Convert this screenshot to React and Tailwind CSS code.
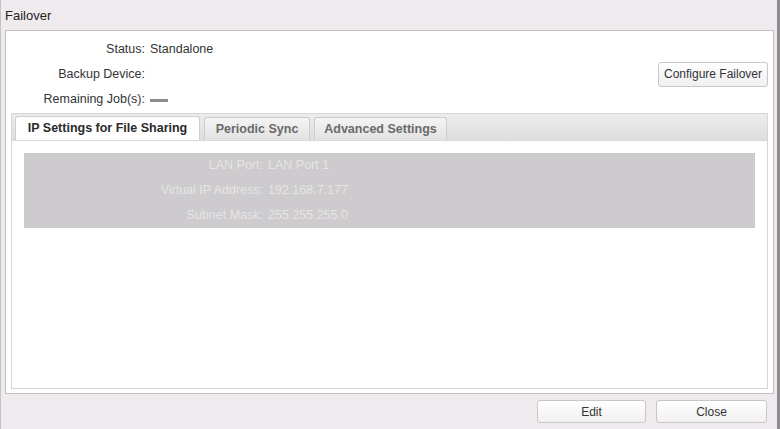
import React from "react";

const font = { fontFamily: '"Liberation Sans", Arial, sans-serif' };

const infoRows = [
  { label: "Status:", value: "Standalone" },
  { label: "Backup Device:", value: "" },
  { label: "Remaining Job(s):", value: "dash" },
];

const ipRows = [
  { label: "LAN Port:", value: "LAN Port 1" },
  { label: "Virtual IP Address:", value: "192.168.7.177" },
  { label: "Subnet Mask:", value: "255.255.255.0" },
];

const Button = ({ children, className }) => (
  <button
    className={
      "h-[23px] rounded-[3px] border border-[#c9c5c9] bg-gradient-to-b from-[#ffffff] to-[#f1eff1] text-[12px] text-[#333] " +
      className
    }
  >
    {children}
  </button>
);

const App = () => {
  return (
    <div
      className="flex h-[429px] w-[780px] flex-col border-l border-[#c4c0c4] border-r-[3px] border-r-[#8e8a8e] bg-[#efeaee] text-[#333]"
      style={font}
    >
      {/* title */}
      <div className="flex h-[30px] items-center pl-[4px] pt-[2px] text-[13px] text-[#222]">
        Failover
      </div>

      {/* main panel */}
      <div className="ml-[4px] mr-[3px] flex h-[364px] flex-col border border-[#c2bec2] bg-white">
        <div className="flex justify-between pt-[6px]">
          <div className="grid grid-cols-[139px_1fr] gap-x-[5px] text-[12.5px]">
            {infoRows.map((r) => (
              <React.Fragment key={r.label}>
                <div className="flex h-[25px] items-center justify-end">{r.label}</div>
                <div className="flex h-[25px] items-center">
                  {r.value === "dash" ? (
                    <span className="mt-[1px] h-[3px] w-[18px] bg-[#8a8a8a]" />
                  ) : (
                    r.value
                  )}
                </div>
              </React.Fragment>
            ))}
          </div>
          <div className="mr-[5px] pt-[24px]">
            <Button className="w-[110px] h-[25px]">Configure Failover</Button>
          </div>
        </div>

        {/* tabs */}
        <div className="ml-[5px] mr-[5px] mt-[1px] flex h-[276px] flex-col border border-[#d6d6d6]">
          <div className="flex h-[27px] items-end gap-[4px] border-b border-[#d8d8d8] bg-gradient-to-b from-[#ececec] to-[#dedede] pl-[3px]">
            <div className="flex h-[24px] w-[185px] items-center justify-center rounded-t-[3px] border border-b-0 border-[#cfcfcf] bg-white text-[12.5px] font-bold text-[#2a2a2a]">
              IP Settings for File Sharing
            </div>
            <div className="flex h-[23px] w-[106px] items-center justify-center rounded-t-[3px] border border-b-0 border-[#cdcdcd] bg-gradient-to-b from-[#f4f4f4] to-[#e2e2e2] text-[12.5px] font-bold text-[#6a6a6a]">
              Periodic Sync
            </div>
            <div className="flex h-[23px] w-[133px] items-center justify-center rounded-t-[3px] border border-b-0 border-[#cdcdcd] bg-gradient-to-b from-[#f4f4f4] to-[#e2e2e2] text-[12.5px] font-bold text-[#6a6a6a]">
              Advanced Settings
            </div>
          </div>
          <div className="flex-1 bg-white px-[12px] pt-[12px]">
            <div className="grid grid-cols-[239px_1fr] gap-x-[5px] bg-[#cdcbcd] text-[12.5px] text-[#e6e4e6]">
              {ipRows.map((r) => (
                <React.Fragment key={r.label}>
                  <div className="flex h-[25px] items-center justify-end">{r.label}</div>
                  <div className="flex h-[25px] items-center">{r.value}</div>
                </React.Fragment>
              ))}
            </div>
          </div>
        </div>
      </div>

      {/* footer buttons */}
      <div className="flex justify-end gap-[10px] pr-[10px] pt-[6px]">
        <Button className="w-[109px]">Edit</Button>
        <Button className="w-[111px]">Close</Button>
      </div>
    </div>
  );
};

export default App;
